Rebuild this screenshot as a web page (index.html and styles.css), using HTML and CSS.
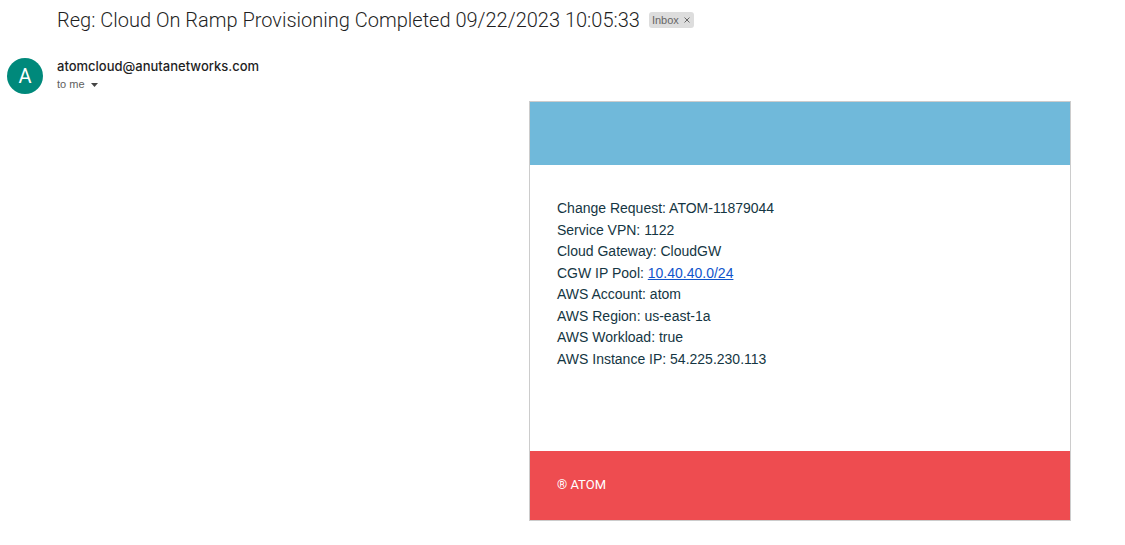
FILE: index.html
```html
<!DOCTYPE html>
<html lang="en">

<head>
  <meta charset="UTF-8" />
  <meta name="viewport" content="width=device-width, initial-scale=1.0" />
  <title>Cloud On Ramp Provisioning Completed</title>
  <link rel="stylesheet" href="styles.css">
</head>

<body>
  <header class="subject">
    <h1>Reg: Cloud On Ramp Provisioning Completed 09/22/2023 10:05:33</h1>
    <div class="label">
      <span>Inbox</span>
      <button type="button" class="label-remove" aria-label="Remove label Inbox">
        <svg width="6" height="6" viewBox="0 0 6 6"><path d="M0.5 0.5 5.5 5.5M5.5 0.5 0.5 5.5" /></svg>
      </button>
    </div>
  </header>
  <section class="sender">
    <div class="avatar">A</div>
    <div>
      <div class="sender-name">atomcloud@anutanetworks.com</div>
      <button type="button" class="details">
        to me
        <svg width="7" height="4" viewBox="0 0 7 4"><path d="M0 0h7L3.500 4z" /></svg>
      </button>
    </div>
  </section>
  <main class="mail">
    <div class="mail-top"></div>
    <div class="mail-body">
      <div class="mail-lines">
        <p>Change Request: ATOM-11879044</p>
        <p>Service VPN: 1122</p>
        <p>Cloud Gateway: CloudGW</p>
        <p>CGW IP Pool: <a href="#">10.40.40.0/24</a></p>
        <p>AWS Account: atom</p>
        <p>AWS Region: us-east-1a</p>
        <p>AWS Workload: true</p>
        <p>AWS Instance IP: 54.225.230.113</p>
      </div>
    </div>
    <footer class="mail-footer">® ATOM</footer>
  </main>
</body>

</html>
```
FILE: styles.css
```css
* { box-sizing: border-box; }
body {
  margin: 0;
  background: #fff;
  font-family: "Liberation Sans", Arial, sans-serif;
  color: #1f1f1f;
}
h1, p { margin: 0; }
button {
  border: 0;
  padding: 0;
  background: none;
  font: inherit;
  color: inherit;
}
.subject {
  display: flex;
  align-items: center;
  gap: 9px;
  height: 40px;
  padding-left: 57px;
}
.subject h1 {
  font: 300 20px/28px Roboto, sans-serif;
}
.label {
  display: flex;
  align-items: center;
  gap: 5px;
  height: 16px;
  padding: 0 4px 0 3px;
  border-radius: 3px;
  background: #ddd;
  color: #666;
  font-size: 11px;
}
.label-remove { display: flex; }
.label-remove svg { stroke: #666; }
.sender {
  display: flex;
  gap: 14px;
  padding: 17px 7px 7px;
}
.avatar {
  width: 36px;
  height: 36px;
  margin-top: 1px;
  border-radius: 50%;
  background: #00897b;
  color: #fff;
  font: 400 20px/37px Roboto, sans-serif;
  text-align: center;
}
.sender-name {
  font: 500 13px/19px Inter, sans-serif;
}
.details {
  display: flex;
  align-items: center;
  gap: 6px;
  font-size: 11px;
  line-height: 17px;
  color: #5e5e5e;
}
.details svg { fill: #444; }
.mail {
  max-width: 542px;
  margin: 0 54px 0 auto;
  border: 1px solid #ccc;
}
.mail-top {
  height: 63px;
  background: #70b9da;
}
.mail-body {
  min-height: 286px;
  padding: 33px 27px;
  font-size: 14px;
  line-height: 20px;
  color: #153643;
}
.mail-lines {
  display: flex;
  flex-direction: column;
  justify-content: space-between;
  min-height: 171px;
}
.mail-body a { color: #15c; }
.mail-footer {
  padding: 25px 27px 27px;
  background: #ee4c50;
  color: #fff;
  font: 400 13px/17px Roboto, sans-serif;
}
```
